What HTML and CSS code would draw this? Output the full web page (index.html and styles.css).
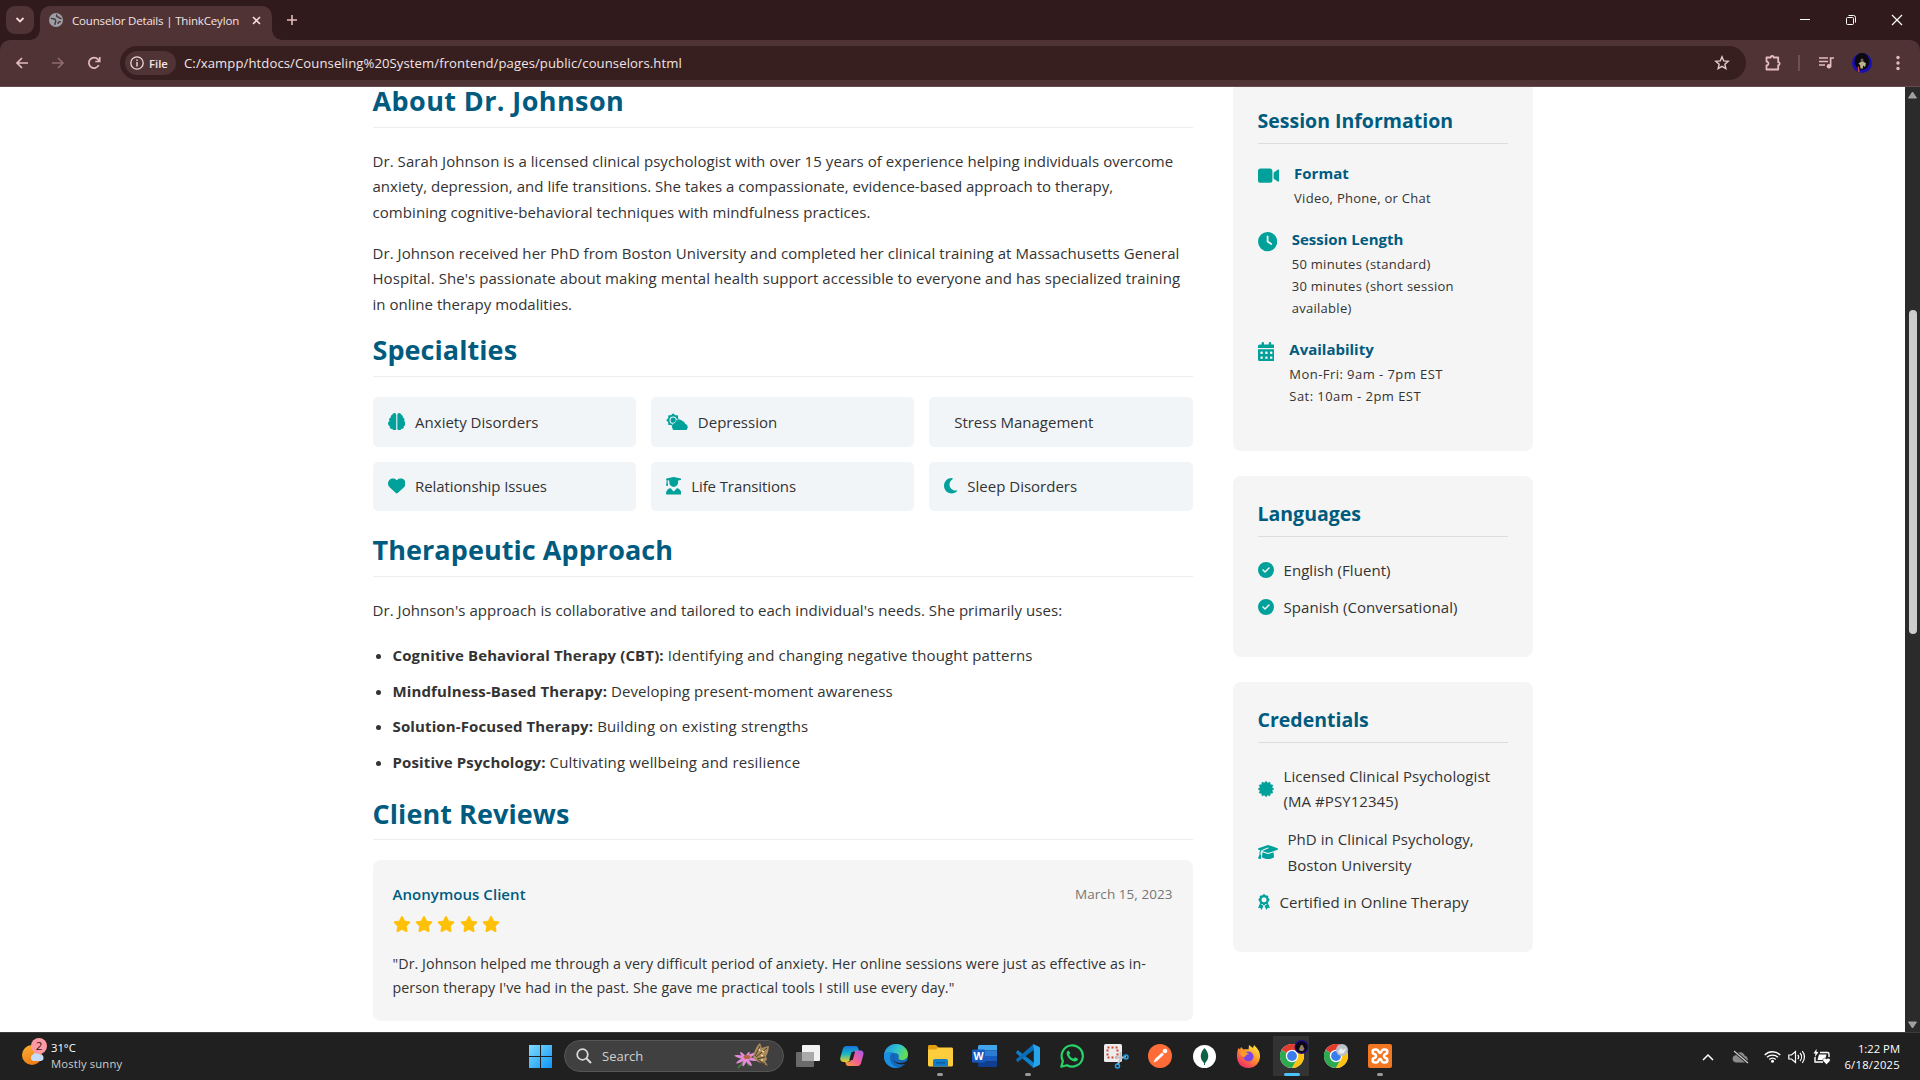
FILE: index.html
```html
<!DOCTYPE html>
<html lang="en">
<head>
<meta charset="utf-8">
<title>Counselor Details | ThinkCeylon</title>
<link rel="stylesheet" href="styles.css">
</head>
<body>
<svg class="defs" width="0" height="0">
  <defs>
    <symbol id="star" viewBox="0 0 576 512"><path d="M316.9 18C311.6 7 300.4 0 288.1 0s-23.4 7-28.8 18L195 150.3 51.4 171.5c-12 1.8-22 10.2-25.7 21.7s-.7 24.2 7.9 32.7L137.8 329 113.2 474.7c-2 12 3 24.2 12.9 31.3s23 8 33.8 2.3l128.3-68.5 128.3 68.5c10.8 5.7 23.9 4.9 33.8-2.3s14.9-19.3 12.9-31.3L438.5 329 542.7 225.9c8.6-8.5 11.7-21.2 7.9-32.7s-13.7-19.9-25.7-21.7L381.2 150.3 316.9 18z"/></symbol>
    <symbol id="check" viewBox="0 0 512 512"><path d="M256 512A256 256 0 1 0 256 0a256 256 0 1 0 0 512zM369 209L241 337c-9.4 9.4-24.6 9.4-33.9 0l-64-64c-9.4-9.4-9.4-24.6 0-33.9s24.6-9.4 33.9 0l47 47L335 175c9.4-9.4 24.6-9.4 33.9 0s9.4 24.6 0 33.9z"/></symbol>
    <symbol id="chrome" viewBox="0 0 24 24"><circle cx="12" cy="12" r="12" fill="#fff"/><path d="M12 12 1.6 6A12 12 0 0 1 22.4 6z" fill="#e33b2e"/><path d="M12 12 1.6 6A12 12 0 0 0 12 24L17.2 15z" fill="#2da94f"/><path d="M12 6.2H22.5A12 12 0 0 1 12 24l5.2-9z" fill="#fdc310"/><circle cx="12" cy="12" r="6.2" fill="#fff"/><circle cx="12" cy="12" r="4.9" fill="#3b7ded"/></symbol>
  </defs>
</svg>

<header class="browser">
  <div class="tabstrip">
    <button class="tab-search"><svg width="10" height="8" viewBox="0 0 10 8"><path d="M1.5 2 5 5.5 8.5 2" fill="none" stroke="#f0dada" stroke-width="1.8"/></svg></button>
    <div class="tab">
      <svg class="favicon" width="14" height="14" viewBox="0 0 14 14"><circle cx="7" cy="7" r="7" fill="#9aa0a6"/><path d="M2 5c1.500 1.500 3.500 0 4.500 2s-1 2.500-.5 5M8 1.500c-1 1.500-.5 2.500 1 2.500s1 2 3.500 1.500M12 9c-1.500-1-3 0-3 2" stroke="#503335" stroke-width="1.400" fill="none"/></svg>
      <span class="tab-title">Counselor Details | ThinkCeylon</span>
      <svg class="tab-close" width="9" height="9" viewBox="0 0 9 9"><path d="M1 1l7 7M8 1 1 8" stroke="#f0dada" stroke-width="1.600"/></svg>
    </div>
    <svg class="new-tab" width="12" height="12" viewBox="0 0 12 12"><path d="M6 1v10M1 6h10" stroke="#e5bcbd" stroke-width="1.600"/></svg>
    <div class="window-controls">
      <svg width="46" height="40" viewBox="0 0 46 40"><path d="M18 19.500h10" stroke="#fff"/></svg>
      <svg width="46" height="40" viewBox="0 0 46 40"><rect x="18.500" y="17.500" width="7" height="7" rx="1" fill="none" stroke="#fff"/><path d="M20.500 15.500h5a2 2 0 0 1 2 2v5" fill="none" stroke="#fff"/></svg>
      <svg width="46" height="40" viewBox="0 0 46 40"><path d="M18 15l10 10M28 15 18 25" stroke="#fff" stroke-width="1.200"/></svg>
    </div>
  </div>
  <div class="toolbar">
    <div class="nav">
      <svg width="14" height="14" viewBox="0 0 14 14"><path d="M13 7H2M7 2 2 7l5 5" fill="none" stroke="#e5bcbd" stroke-width="1.700"/></svg>
      <svg width="14" height="14" viewBox="0 0 14 14"><path d="M1 7h11M7 2l5 5-5 5" fill="none" stroke="#8d6b6d" stroke-width="1.700"/></svg>
      <svg width="14" height="14" viewBox="0 0 14 14"><path d="M11.800 9A5.200 5.200 0 1 1 11 3.400L12.500 5M12.700 1v4.500H8.300" fill="none" stroke="#e5bcbd" stroke-width="1.700"/></svg>
    </div>
    <div class="omnibox">
      <div class="chip"><svg width="14" height="14" viewBox="0 0 14 14"><circle cx="7" cy="7" r="6.200" fill="none" stroke="#f0dada" stroke-width="1.300"/><path d="M7 6v4.500M7 3.400v1.500" stroke="#f0dada" stroke-width="1.400"/></svg><span>File</span></div>
      <span class="url">C:/xampp/htdocs/Counseling%20System/frontend/pages/public/counselors.html</span>
      <svg class="bookmark" width="16" height="16" viewBox="0 0 16 16"><path d="M8 1.800l1.750 4.100 4.450.4-3.370 2.950 1 4.350L8 11.300l-3.830 2.300 1-4.350L1.800 6.300l4.450-.4z" fill="none" stroke="#e5cccc" stroke-width="1.400"/></svg>
    </div>
    <div class="actions">
      <svg width="18" height="18" viewBox="0 0 18 18"><path d="M2.500 3.500h4.200a1.500 1.500 0 0 1 3 0h4.500v4.700a1.500 1.500 0 0 1 0 3v4.300H2.500v-4a2 2 0 0 0 0-4z" fill="none" stroke="#e5bcbd" stroke-width="1.800" stroke-linejoin="round"/></svg>
      <span class="divider"></span>
      <svg width="16" height="14" viewBox="0 0 16 14"><path d="M0 2h9M0 5.500h9M0 9h6" stroke="#e5bcbd" stroke-width="1.600"/><circle cx="10" cy="10.200" r="2.300" fill="#e5bcbd"/><path d="M11.600 10.500V2H15" fill="none" stroke="#e5bcbd" stroke-width="1.700"/></svg>
      <svg class="avatar" width="20" height="20" viewBox="0 0 20 20"><circle cx="10" cy="10" r="10" fill="#1a0fb0"/><ellipse cx="10" cy="8.500" rx="7.400" ry="8.500" fill="#0a0810"/><circle cx="10" cy="7" r="1.500" fill="#7a5a48"/><path d="M6.500 10.500l2.500-2h2.500l2.500 2-1 3.500-2-1.500V15.500H8.500l-.5-3.500z" fill="#b8b08e"/><path d="M6.300 13.500 6.800 19" stroke="#c8502a" stroke-width="1.300"/></svg>
      <svg width="4" height="16" viewBox="0 0 4 16"><g fill="#e5bcbd"><circle cx="2" cy="2.500" r="1.700"/><circle cx="2" cy="8" r="1.700"/><circle cx="2" cy="13.500" r="1.700"/></g></svg>
    </div>
  </div>
</header>

<div class="viewport">
  <main class="page">
    <section class="details">
      <h2 class="wide">About Dr. Johnson</h2>
      <p>Dr. Sarah Johnson is a licensed clinical psychologist with over 15 years of experience helping individuals overcome<br><span class="tight">anxiety, depression, and life transitions. She takes a compassionate, evidence-based approach to therapy,</span><br>combining cognitive-behavioral techniques with mindfulness practices.</p>
      <p>Dr. Johnson received her PhD from Boston University and completed her clinical training at Massachusetts General<br>Hospital. She's passionate about making mental health support accessible to everyone and has specialized training<br><span class="tight">in online therapy modalities.</span></p>
      <h2>Specialties</h2>
      <div class="specialties">
        <div class="specialty"><svg class="w16" viewBox="0 0 512 512"><path d="M184 0c30.900 0 56 25.100 56 56V456c0 30.900-25.100 56-56 56c-28.900 0-52.700-21.900-55.700-50.100c-5.200 1.400-10.700 2.100-16.300 2.100c-35.300 0-64-28.700-64-64c0-7.400 1.300-14.600 3.600-21.200C21.400 367.400 0 338.200 0 304c0-31.900 18.700-59.500 45.800-72.300C37.100 220.800 32 207 32 192c0-30.700 21.600-56.300 50.400-62.600C80.800 123.900 80 118 80 112c0-29.900 20.600-55.100 48.300-62.100C131.300 21.900 155.100 0 184 0zM328 0c28.900 0 52.600 21.900 55.700 49.900c27.800 7 48.300 32.100 48.300 62.100c0 6-.8 11.900-2.400 17.400c28.800 6.200 50.400 31.900 50.400 62.600c0 15-5.100 28.800-13.800 39.700C493.300 244.500 512 272.100 512 304c0 34.200-21.400 63.400-51.600 74.800c2.300 6.600 3.600 13.800 3.600 21.200c0 35.300-28.700 64-64 64c-5.600 0-11.100-.7-16.300-2.100c-3 28.200-26.800 50.100-55.700 50.100c-30.900 0-56-25.100-56-56V56c0-30.900 25.100-56 56-56z"/></svg><span>Anxiety Disorders</span></div>
        <div class="specialty"><svg class="w20" viewBox="0 0 640 512"><g transform="translate(208 208)"><rect x="-142" y="-142" width="284" height="284" rx="14"/><rect x="-142" y="-142" width="284" height="284" rx="14" transform="rotate(45)"/><circle r="92" fill="none" stroke="#f2f5f8" stroke-width="32"/></g><path d="M288 512a112 112 0 0 1-30-220 128 128 0 0 1 222-62 100 100 0 0 1 76 82A102 102 0 0 1 544 512z" stroke="#f2f5f8" stroke-width="26" paint-order="stroke"/></svg><span>Depression</span></div>
        <div class="specialty"><svg class="w0"></svg><span>Stress Management</span></div>
        <div class="specialty"><svg class="w16" viewBox="0 0 512 512"><path d="M47.600 300.400L228.300 469.100c7.500 7 17.400 10.900 27.700 10.900s20.200-3.900 27.700-10.900L464.400 300.400c30.400-28.300 47.600-68 47.600-109.500v-5.800c0-69.900-50.500-129.500-119.400-141C347 36.500 300.600 51.400 268 84L256 96 244 84c-32.600-32.600-79-47.500-124.600-39.900C50.500 55.600 0 115.200 0 185.100v5.800c0 41.500 17.200 81.200 47.600 109.500z"/></svg><span class="narrow">Relationship Issues</span></div>
        <div class="specialty"><svg class="w14" viewBox="0 0 448 512"><path d="M219.300 .5c3.100-.6 6.300-.6 9.400 0l200 40C439.900 42.700 448 52.600 448 64s-8.100 21.300-19.300 23.500L352 102.900V160c0 70.700-57.300 128-128 128s-128-57.300-128-128V102.900L48 93.300v65.100l15.700 78.400c.9 4.700-.3 9.600-3.300 13.300s-7.600 5.900-12.400 5.900H16c-4.800 0-9.300-2.100-12.400-5.900s-4.300-8.600-3.300-13.300L16 158.400V86.600C6.500 83.300 0 74.300 0 64C0 52.600 8.100 42.700 19.300 40.500l200-40zM111.900 327.700c10.500-3.400 21.800 .4 29.400 8.500l71 75.500c6.300 6.700 17 6.700 23.300 0l71-75.500c7.600-8.100 18.900-11.900 29.400-8.500C401 348.600 448 409.400 448 481.300c0 17-13.800 30.700-30.700 30.700H30.700C13.800 512 0 498.200 0 481.300c0-71.900 47-132.700 111.900-153.600z"/></svg><span class="narrow">Life Transitions</span></div>
        <div class="specialty"><svg class="w12" viewBox="0 0 384 512"><path d="M223.500 32C100 32 0 132.300 0 256S100 480 223.500 480c60.600 0 115.500-24.200 155.800-63.400c5-4.900 6.300-12.500 3.100-18.700s-10.100-9.700-17-8.500c-9.800 1.700-19.800 2.600-30.100 2.600c-96.900 0-175.500-78.800-175.500-176c0-65.800 36-123.100 89.300-153.300c6.100-3.500 9.200-10.500 7.700-17.300s-7.300-11.900-14.300-12.500c-6.300-.5-12.600-.8-19-.8z"/></svg><span>Sleep Disorders</span></div>
      </div>
      <h2>Therapeutic Approach</h2>
      <p>Dr. Johnson's approach is collaborative and tailored to each individual's needs. She primarily uses:</p>
      <ul class="methods">
        <li><strong>Cognitive Behavioral Therapy (CBT):</strong> <span class="loose">Identifying and changing negative thought patterns</span></li>
        <li><strong>Mindfulness-Based Therapy:</strong> Developing present-moment awareness</li>
        <li><strong>Solution-Focused Therapy:</strong> <span class="loose">Building on existing strengths</span></li>
        <li><strong>Positive Psychology:</strong> <span class="loose">Cultivating wellbeing and resilience</span></li>
      </ul>
      <h2>Client Reviews</h2>
      <article class="review">
        <div class="review-head"><span class="reviewer">Anonymous Client</span><span class="review-date">March 15, 2023</span></div>
        <div class="stars"><svg><use href="#star"/></svg><svg><use href="#star"/></svg><svg><use href="#star"/></svg><svg><use href="#star"/></svg><svg><use href="#star"/></svg></div>
        <p class="quote">"Dr. Johnson helped me through a very difficult period of anxiety. Her online sessions were just as effective as in-<br>person therapy I've had in the past. She gave me practical tools I still use every day."</p>
      </article>
    </section>

    <aside class="sidebar">
      <section class="card card-session">
        <h3>Session Information</h3>
        <div class="info">
          <svg class="w18" viewBox="0 0 576 512"><path d="M0 128C0 92.700 28.700 64 64 64H320c35.300 0 64 28.700 64 64V384c0 35.300-28.700 64-64 64H64c-35.300 0-64-28.700-64-64V128zM559.100 99.800c10.400 5.600 16.900 16.400 16.900 28.200V384c0 11.800-6.500 22.600-16.900 28.200s-23 5-32.900-1.600l-96-64L416 337.100V320 192 174.900l14.200-9.500 96-64c9.800-6.500 22.400-7.200 32.900-1.600z"/></svg>
          <div><h4>Format</h4><p>Video, Phone, or Chat</p></div>
        </div>
        <div class="info">
          <svg class="w16" viewBox="0 0 512 512"><path d="M256 0a256 256 0 1 1 0 512A256 256 0 1 1 256 0zM232 120V256c0 8 4 15.500 10.700 20l96 64c11 7.400 25.900 4.400 33.300-6.700s4.400-25.900-6.700-33.300L280 243.200V120c0-13.300-10.700-24-24-24s-24 10.700-24 24z"/></svg>
          <div><h4>Session Length</h4><p>50 minutes (standard)<br>30 minutes (short session<br>available)</p></div>
        </div>
        <div class="info">
          <svg class="w14" viewBox="0 0 448 512"><path d="M128 0c17.700 0 32 14.300 32 32V64H288V32c0-17.700 14.300-32 32-32s32 14.300 32 32V64h48c26.500 0 48 21.500 48 48v48H0V112C0 85.500 21.500 64 48 64H96V32c0-17.700 14.300-32 32-32zM0 192H448V464c0 26.500-21.500 48-48 48H48c-26.500 0-48-21.500-48-48V192zm64 80v32c0 8.800 7.200 16 16 16h32c8.800 0 16-7.200 16-16V272c0-8.800-7.200-16-16-16H80c-8.800 0-16 7.200-16 16zm128 0v32c0 8.800 7.200 16 16 16h32c8.800 0 16-7.200 16-16V272c0-8.800-7.200-16-16-16H208c-8.800 0-16 7.200-16 16zm144-16c-8.800 0-16 7.200-16 16v32c0 8.800 7.200 16 16 16h32c8.800 0 16-7.200 16-16V272c0-8.800-7.200-16-16-16H336zM64 400v32c0 8.800 7.200 16 16 16h32c8.800 0 16-7.200 16-16V400c0-8.800-7.200-16-16-16H80c-8.800 0-16 7.200-16 16zm144-16c-8.800 0-16 7.200-16 16v32c0 8.800 7.200 16 16 16h32c8.800 0 16-7.200 16-16V400c0-8.800-7.200-16-16-16H208zm112 16v32c0 8.800 7.200 16 16 16h32c8.800 0 16-7.200 16-16V400c0-8.800-7.200-16-16-16H336c-8.800 0-16 7.200-16 16z"/></svg>
          <div><h4>Availability</h4><p class="hours">Mon-Fri: 9am - 7pm EST<br>Sat: 10am - 2pm EST</p></div>
        </div>
      </section>
      <section class="card">
        <h3>Languages</h3>
        <div class="entry"><svg class="w16"><use href="#check"/></svg><span>English (Fluent)</span></div>
        <div class="entry"><svg class="w16"><use href="#check"/></svg><span>Spanish (Conversational)</span></div>
      </section>
      <section class="card">
        <h3>Credentials</h3>
        <div class="entry"><svg class="w16" viewBox="-8 -8 16 16"><path d="M8 0 6 1.600 6.930 4 4.400 4.400 4 6.930 1.600 6 0 8-1.600 6-4 6.930-4.400 4.400-6.930 4-6 1.600-8 0-6-1.600-6.930-4-4.400-4.400-4-6.930-1.600-6 0-8 1.600-6 4-6.930 4.400-4.400 6.930-4 6-1.600z" stroke="#00a19a" stroke-width=".4" stroke-linejoin="round"/></svg><span>Licensed Clinical Psychologist<br>(MA #PSY12345)</span></div>
        <div class="entry"><svg class="w20" viewBox="0 0 640 512"><path d="M320 32c-8.100 0-16.100 1.400-23.700 4.100L15.800 137.400C6.300 140.900 0 149.900 0 160s6.300 19.100 15.800 22.600l57.900 20.900C57.300 229.300 48 259.800 48 291.900v28.100c0 28.400-10.800 57.700-22.300 80.800c-6.500 13-13.900 25.800-22.500 37.600C0 442.700-.9 448.300 .9 453.400s6 8.900 11.200 10.200l64 16c4.200 1.100 8.700 .3 12.400-2s6.300-6.100 7.100-10.400c8.600-42.800 4.300-81.200-2.100-108.700C90.300 344.300 86 329.800 80 316.500V291.900c0-30.200 10.200-58.700 27.900-81.500c12.900-15.500 29.600-28 49.200-35.700l157-61.700c8.200-3.200 17.500 .8 20.700 9s-.8 17.500-9 20.700l-157 61.700c-12.400 4.900-23.300 12.400-32.200 21.600l159.600 57.600c7.600 2.700 15.600 4.100 23.700 4.100s16.100-1.400 23.700-4.100L624.200 182.600c9.500-3.400 15.800-12.500 15.800-22.600s-6.300-19.100-15.800-22.600L343.700 36.100C336.100 33.400 328.100 32 320 32zM128 408c0 35.300 86 72 192 72s192-36.700 192-72L496.700 262.600 354.500 314c-11.100 4-22.800 6-34.500 6s-23.500-2-34.500-6L143.300 262.600 128 408z"/></svg><span>PhD in Clinical Psychology,<br>Boston University</span></div>
        <div class="entry"><svg class="w12" viewBox="0 0 12 16"><path d="M2 9.500 0 14l2.200-.2L3.500 16l2-4zM10 9.500l2 4.500-2.200-.2L8.500 16l-2-4z"/><g transform="translate(6 5.700)"><rect x="-4.200" y="-4.200" width="8.400" height="8.400" rx="1"/><rect x="-4.200" y="-4.200" width="8.400" height="8.400" rx="1" transform="rotate(45)"/><circle r="2.500" fill="#f5f5f5"/></g></svg><span>Certified in Online Therapy</span></div>
      </section>
    </aside>
  </main>
  <div class="scrollbar">
    <svg width="9" height="8" viewBox="0 0 9 8"><path d="M4.500 1 8.500 7h-8z" fill="#a0a0a0" stroke="#a0a0a0" stroke-linejoin="round"/></svg>
    <span class="thumb"></span>
    <svg width="9" height="8" viewBox="0 0 9 8"><path d="M4.500 7 8.500 1h-8z" fill="#a0a0a0" stroke="#a0a0a0" stroke-linejoin="round"/></svg>
  </div>
</div>

<footer class="taskbar">
  <div class="weather">
    <svg width="26" height="28" viewBox="0 0 26 28"><defs><linearGradient id="sun" x1="0" y1="0" x2=".4" y2="1"><stop offset="0" stop-color="#f9b233"/><stop offset="1" stop-color="#ef7d16"/></linearGradient></defs><circle cx="10" cy="17" r="10" fill="url(#sun)"/><path d="M11 23a3.500 3.500 0 0 1 0-6.500 4 4 0 0 1 7 0 3.300 3.300 0 0 1 1 6.500z" fill="#c5dcfa"/><circle cx="17" cy="8" r="8" fill="#ff99a4"/><text x="17" y="12" text-anchor="middle" class="badge">2</text></svg>
    <div class="weather-text"><div>31°C</div><div class="muted">Mostly sunny</div></div>
  </div>
  <div class="apps">
    <div class="slot"><svg width="23" height="23" viewBox="0 0 23 23"><defs><linearGradient id="win" x1="0" y1="0" x2="1" y2="1"><stop offset="0" stop-color="#7fdcff"/><stop offset="1" stop-color="#0f94f5"/></linearGradient></defs><path d="M0 0h11v11H0zM12 0h11v11H12zM0 12h11v11H0zM12 12h11v11H12z" fill="url(#win)"/></svg></div>
    <div class="search">
      <svg width="16" height="16" viewBox="0 0 16 16"><circle cx="6.500" cy="6.500" r="5.300" fill="none" stroke="#dcdcdc" stroke-width="1.700"/><path d="M10.400 10.400 15 15" stroke="#dcdcdc" stroke-width="2"/></svg>
      <span>Search</span>
      <svg class="butterfly" width="36" height="26" viewBox="0 0 36 26"><path d="M12 16 4 25M12 17l3 6" stroke="#4a8a3c" stroke-width="1.200"/><g fill="#e58ad8"><ellipse cx="12" cy="15" rx="12" ry="1.800" transform="rotate(12 12 15)"/><ellipse cx="12" cy="15" rx="11" ry="1.700" transform="rotate(-28 12 15)"/><ellipse cx="12" cy="16" rx="9" ry="1.700" transform="rotate(50 12 16)"/><ellipse cx="12" cy="16" rx="8" ry="1.700" transform="rotate(-65 12 16)"/></g><ellipse cx="13" cy="14" rx="3.500" ry="2" fill="#b0683a"/><path d="M19 15C20 9 22 3 26 0l2 5c2-1 5-2 7-2-.5 4-1 8-3 10l1 4-2 1 3 5-6-3-4-1z" fill="#a98a5c"/><path d="M21 13l5-10M22 14 33 5M23 16l8-2M24 17l7 4" stroke="#4b3a24"/><path d="M25 6l1 2M28 8l2 1M27 12l2 1M27 17l2 0" stroke="#ead5a8" stroke-width="1.500"/></svg>
    </div>
    <div class="slot"><svg width="24" height="24" viewBox="0 0 24 24"><rect x="0" y="8" width="18" height="15" rx="1" fill="#6a6a6a"/><rect x="6" y="1" width="18" height="16" rx="1" fill="#f2f2f2"/><path d="M6 8h12v9H6z" fill="#aaa"/></svg></div>
    <div class="slot"><svg width="24" height="22" viewBox="0 0 24 22"><defs><linearGradient id="cpa" x1="0" y1="0" x2="0" y2="1"><stop offset="0" stop-color="#1673df"/><stop offset=".5" stop-color="#18b7c4"/><stop offset="1" stop-color="#f3cf23"/></linearGradient><linearGradient id="cpb" x1="1" y1="0" x2="0" y2="1"><stop offset="0" stop-color="#a45bf0"/><stop offset=".5" stop-color="#f25c98"/><stop offset="1" stop-color="#fba02f"/></linearGradient></defs><path d="M6.500 1h9c2 0 2.500 1 3 3l.5 2h-4c-2 0-2.500 1-3 3l-1.500 5c-.7 2-1.500 3-4 3H4c-3 0-4.500-2-3.500-5l2.300-8C3.500 2 4.500 1 6.500 1z" fill="url(#cpa)"/><path d="M17.500 21h-9c-2 0-2.500-1-3-3l-.3-1H8c2 0 3-1 3.500-3L13 9c.7-2 1.500-3.500 4-3.500h3c3 0 4 2 3.300 4.500l-2.200 8c-.7 2-1.600 3-3.600 3z" fill="url(#cpb)"/><path d="M11.500 7h3.500l-2.300 8H9.300z" fill="#202020"/></svg></div>
    <div class="slot"><svg width="24" height="24" viewBox="0 0 24 24"><defs><linearGradient id="eda" x1="0" y1="0" x2="1" y2=".4"><stop offset="0" stop-color="#1b8ede"/><stop offset=".6" stop-color="#32c6cb"/><stop offset="1" stop-color="#62dc55"/></linearGradient></defs><circle cx="12" cy="12" r="12" fill="#1468bd"/><path d="M0 11C1 4 6 0 12 0c7 0 12 5 12 10 0 4-3 6-6 6-2.500 0-4-.8-3.500-2 .8-1.200.5-5-4-5C6 9 2 9 0 11z" fill="url(#eda)"/><path d="M0 11c2-3 6-4 10-3-4 1-5 5-3.500 9 1.300 4 5 6.500 9 6C8 26-1 20 0 11z" fill="#1b8fe0"/><path d="M10 10.500c-2 2-1 6 2 7.500s7 1.200 10-.5l3-1v4l-2 .5-2.500-1c-3 1-9 .5-11-4-.8-2-.5-4 .5-5.500z" fill="#202020"/></svg></div>
    <div class="slot running"><svg width="25" height="22" viewBox="0 0 25 22"><path d="M0 1.500C0 .7.700 0 1.500 0H8l3 3h12.500c.8 0 1.500.7 1.500 1.500V10H0z" fill="#e2a010"/><path d="M0 4.500h8l2-2h13.500c.8 0 1.500.7 1.500 1.500v16c0 .8-.7 1.500-1.500 1.500h-22C.7 21.500 0 20.800 0 20z" fill="#fdcd3d"/><path d="M5 21.500V16c0-1.200.8-2 2-2h11c1.200 0 2 .8 2 2v5.500z" fill="#127cc9"/><path d="M8 17h9v1.500H8z" fill="#0a5ba0"/></svg></div>
    <div class="slot"><svg width="25" height="22" viewBox="0 0 25 22"><path d="M6 1.500C6 .7 6.700 0 7.500 0H25v5.500H6z" fill="#41a5ee"/><path d="M6 5.500h19V11H6z" fill="#2b7cd3"/><path d="M6 11h19v5.500H6z" fill="#185abd"/><path d="M6 16.500h19V22H7.500C6.700 22 6 21.300 6 20.500z" fill="#103f91"/><rect y="4.500" width="13" height="13" rx="1.300" fill="#185abd"/><text x="6.500" y="14.500" text-anchor="middle" class="word-mark">W</text></svg></div>
    <div class="slot running"><svg width="24" height="24" viewBox="0 0 24 24"><path d="M1.500 6 19 19.500 17.500 24 0 9z" fill="#0f7fcb"/><path d="M0 15.500 17.500 0l1.500 5L1.500 18.200z" fill="#0a6db8"/><path d="M17 0l6 2.700c.6.300 1 .8 1 1.500v15.600c0 .7-.4 1.200-1 1.500L17 24l.8-5V5z" fill="#27a4ee"/></svg></div>
    <div class="slot"><svg width="24" height="24" viewBox="0 0 24 24"><path d="M1.300 22.700 2.900 17A10.600 10.600 0 1 1 7 21.200z" fill="none" stroke="#25d366" stroke-width="2.200" stroke-linejoin="round"/><path d="M8.500 6.500c-1.500.5-2.300 2-1.700 4 1 3.500 4.500 6.700 8 7 1.800.1 3-.8 3.200-2.700l-3-1.600-1.600 1.500c-2-.8-3.400-2.200-4.200-4L10.400 9z" fill="#25d366"/></svg></div>
    <div class="slot"><svg width="25" height="25" viewBox="0 0 25 25"><rect width="18" height="18" rx="1.500" fill="#ececec"/><rect x="3.500" y="3.500" width="10" height="10" fill="none" stroke="#d8432c" stroke-width="2" stroke-dasharray="2 2"/><path d="M16.500 8v7l-3 6M12 13.500h7l3-1" stroke="#bfc5ca" stroke-width="1.800" fill="none"/><circle cx="22" cy="13" r="2" fill="none" stroke="#2aa0e8" stroke-width="1.500"/><circle cx="13.500" cy="22" r="2" fill="none" stroke="#2aa0e8" stroke-width="1.500"/></svg></div>
    <div class="slot"><svg width="24" height="24" viewBox="0 0 24 24"><circle cx="12" cy="12" r="12" fill="#ff6c37"/><path d="M5.500 18.500 7 15l7-6.500 2 2L9 17z" fill="#fff"/><circle cx="17" cy="7" r="2.300" fill="#fff"/></svg></div>
    <div class="slot"><svg width="23" height="23" viewBox="0 0 23 23"><circle cx="11.500" cy="11.500" r="11.500" fill="#fff"/><path d="M11.500 3c5 5.500 5 11 0 15.500C6.500 14 6.500 8.500 11.500 3z" fill="#116149"/><path d="M11.500 14v6" stroke="#116149"/></svg></div>
    <div class="slot"><svg width="24" height="24" viewBox="0 0 24 24"><defs><linearGradient id="ff" x1=".9" y1="0" x2=".2" y2="1"><stop offset="0" stop-color="#fff04a"/><stop offset=".45" stop-color="#ff9a28"/><stop offset="1" stop-color="#f0206e"/></linearGradient></defs><path d="M2.500 4 4 5.500 5 3l2.500 2.500c2-.5 3-.5 5 0L13 1l4 3 1-3c3 3 6 6 6 11A11.500 11.500 0 0 1 12 24C5 24 1 19 1 12c0-3 .5-6 1.500-8z" fill="url(#ff)"/><circle cx="12.500" cy="12.500" r="5" fill="#7a45e5"/><path d="M4 9c3-2 7-1 9 1-2 0-3 1-4 3-2 0-4-1-5-4z" fill="#ff9e2c"/></svg></div>
    <div class="slot active"><svg width="29" height="28" viewBox="0 0 29 28"><use href="#chrome" x="0" y="4" width="24" height="24"/><circle cx="21.500" cy="7" r="7" fill="#1d0c8a"/><circle cx="21.500" cy="7" r="5.800" fill="#0c0814"/><path d="M19 9l2-4h1.500l2 4-1.500 2h-3z" fill="#8f8061"/></svg></div>
    <div class="slot"><svg width="24" height="24" viewBox="0 0 24 24"><use href="#chrome" width="24" height="24"/><circle cx="18" cy="6" r="6" fill="#b9c2c8"/><path d="M14 8l3-4 2 2 3-2-2 5-3 1z" fill="#e8eef2"/></svg></div>
    <div class="slot running"><svg width="24" height="24" viewBox="0 0 24 24"><rect width="24" height="24" rx="2" fill="#f37623"/><path d="M7 5.500h1.500C11 5.500 10 9 12 9s1-3.500 3.500-3.500H17c3 0 3 4 .5 4.500-2 .6-2 3.400 0 4 2.500.5 2.500 4.500-.5 4.500h-1.500C13 18.500 14 15 12 15s-1 3.500-3.500 3.500H7c-3 0-3-4-.5-4.500 2-.6 2-3.400 0-4C4 9.500 4 5.500 7 5.500z" fill="none" stroke="#fff" stroke-width="2.600"/></svg></div>
  </div>
  <div class="tray">
    <svg width="12" height="8" viewBox="0 0 12 8"><path d="M1 7l5-5 5 5" fill="none" stroke="#fff" stroke-width="1.500"/></svg>
    <svg class="cloud" width="17" height="14" viewBox="0 0 17 14"><path d="M4 12.500a3.700 3.700 0 0 1-.5-7.300 5 5 0 0 1 9.300.5 3.500 3.500 0 0 1 .5 6.800z" fill="#8a8a8a"/><path d="M2 1l14 12" stroke="#202020" stroke-width="3"/><path d="M2 1l14 12" stroke="#ccc" stroke-width="1.200"/></svg>
    <svg width="17" height="13" viewBox="0 0 17 13"><g fill="none" stroke="#fff" stroke-width="1.300"><path d="M.7 5a11 11 0 0 1 15.600 0M3 7.300a7.800 7.800 0 0 1 11 0M5.300 9.500a4.500 4.500 0 0 1 6.400 0"/></g><circle cx="8.500" cy="11.300" r="1.500" fill="#fff"/></svg>
    <svg width="18" height="14" viewBox="0 0 18 14"><g fill="none" stroke="#fff" stroke-width="1.200"><path d="M.8 5v4h2.700L7.500 12.500v-11L3.500 5zM9.800 4.800a3.500 3.500 0 0 1 0 4.400M12 3a6 6 0 0 1 0 8M14.300 1.200a9 9 0 0 1 0 11.600"/></g></svg>
    <svg width="18" height="16" viewBox="0 0 18 16"><path d="M7 3.500h7.500a1.500 1.500 0 0 1 1.500 1.500v3M2 8v5h8" fill="none" stroke="#fff" stroke-width="1.400"/><path d="M6 5.500h7.500l-1.500 5.500H4.500z" fill="#fff"/><path d="M3.500 0 .5 4.500h2L2 8l3.500-5h-2z" fill="#fff"/><path d="M13.500 15.500 10 12c-1-2 1.500-4 3.500-2 2-2 4.500 0 3.500 2z" fill="#fff" stroke="#202020" stroke-width=".5"/></svg>
    <div class="clock"><div>1:22 PM</div><div class="date">6/18/2025</div></div>
  </div>
</footer>
</body>
</html>
```
FILE: styles.css
```css
* { box-sizing: border-box; margin: 0; padding: 0; }
body { width: 1920px; height: 1080px; overflow: hidden; display: flex; flex-direction: column; background: #fff; font-family: "Open Sans", "Noto Sans", sans-serif; font-size: 15px; color: #333; }
svg { display: block; flex: none; }
.defs { position: absolute; }

/* browser chrome */
.browser { height: 87px; background: #311a1b; color: #f3e4e4; }
.tabstrip { height: 40px; display: flex; align-items: center; padding-left: 6px; }
.tab-search { width: 28px; height: 28px; border: 0; border-radius: 9px; background: #503335; display: grid; place-items: center; margin-right: 6px; }
.tab { position: relative; align-self: flex-end; width: 232px; height: 34px; border-radius: 10px 10px 0 0; background: #503335; display: flex; align-items: center; padding: 0 11px 6px 9px; }
.tab::before, .tab::after { content: ""; position: absolute; bottom: 0; width: 10px; height: 10px; }
.tab::before { left: -10px; background: radial-gradient(circle at 0 0, transparent 9.5px, #503335 10px); }
.tab::after { right: -10px; background: radial-gradient(circle at 100% 0, transparent 9.5px, #503335 10px); }
.tab-title { margin-left: 9px; font-size: 11.5px; letter-spacing: -.17px; white-space: nowrap; }
.tab-close { margin-left: auto; }
.new-tab { margin-left: 14px; }
.window-controls { margin-left: auto; display: flex; }
.toolbar { height: 47px; background: #503335; border-bottom: 1px solid #664a4c; border-radius: 10px 10px 0 0; display: flex; align-items: center; }
.nav { width: 120px; padding-left: 15px; display: flex; gap: 22px; }
.omnibox { width: 1626px; height: 34px; border-radius: 17px; background: #371f20; display: flex; align-items: center; padding: 0 16px 0 5px; }
.chip { width: 51px; height: 24px; border-radius: 12px; background: #503335; display: flex; align-items: center; gap: 5px; padding-left: 5px; font-size: 11.3px; font-weight: 600; }
.url { margin-left: 8px; font-size: 13.1px; letter-spacing: .095px; white-space: nowrap; }
.bookmark { margin-left: auto; }
.actions { flex: 1; display: flex; align-items: center; padding-left: 18px; }
.divider { width: 2px; height: 16px; background: #6e5153; margin: 0 19px 0 16px; }
.avatar { margin: 0 24px 0 17px; }

/* page */
.viewport { height: 945px; overflow: hidden; display: flex; }
.page { width: 1905px; padding-left: 372.5px; display: grid; grid-template-columns: 820px 300px; column-gap: 40px; align-items: start; letter-spacing: .065px; }
.details { margin-top: -4.6px; }
h2 { color: #005b7f; font-size: 27px; font-weight: 700; line-height: 34.56px; padding: 1.9px 0 8.1px; border-bottom: 1px solid #eee; margin-bottom: 20px; }
h2.wide { letter-spacing: .4px; }
p { line-height: 25.6px; padding-top: .8px; margin-bottom: 14.2px; white-space: nowrap; }
.tight { letter-spacing: .025px; }
.loose { letter-spacing: .16px; }
.narrow { letter-spacing: -.1px; }
.specialties { display: grid; grid-template-columns: repeat(3, 1fr); gap: 15px; margin-bottom: 20px; letter-spacing: 0; }
.specialty { display: flex; align-items: center; gap: 10px; padding: 12px 15px; line-height: 25.6px; background: #f2f5f8; border-radius: 5px; }
.specialty svg { fill: #00a19a; height: 17.6px; margin-top: -1px; font-size: 17.6px; }
.specialty span { padding-top: .8px; margin-bottom: -.8px; }
.w0 { width: 0; }
.w12 { width: .75em; }
.w14 { width: .875em; }
.w16 { width: 1em; }
.w18 { width: 1.125em; }
.w20 { width: 1.25em; }
.methods { margin: 20.2px 0 19.4px; padding-left: 20px; }
.methods li { line-height: 25.6px; margin-bottom: 9.9px; }
.methods li:last-child { margin-bottom: 0; }
.methods strong { letter-spacing: .13px; }
.review { background: #f5f5f5; border-radius: 8px; padding: 20px; }
.review-head { display: flex; justify-content: space-between; line-height: 25.6px; padding-top: 1.2px; margin-bottom: 3.6px; letter-spacing: .05px; }
.reviewer { font-weight: 600; color: #005b7f; }
.review-date { font-size: 13.5px; color: #777; }
.stars { display: flex; align-items: center; gap: 4.38px; height: 25.6px; margin-bottom: 15px; }
.stars svg { width: 18px; height: 16px; fill: #ffc107; }
.quote { font-size: 14.25px; line-height: 24.32px; margin: 0; }

.sidebar { display: grid; gap: 25px; margin-top: -4px; }
.card { background: #f5f5f5; border-radius: 8px; padding: 25px; }
.card-session { padding-bottom: 23.8px; }
h3 { color: #005b7f; font-size: 19.5px; font-weight: 700; line-height: 24.96px; padding: 1px 0 9px; border-bottom: 1px solid #ddd; margin-bottom: 20px; letter-spacing: 0; }
.info { display: flex; gap: 15px; margin-bottom: 20px; }
.info svg { fill: #00a19a; font-size: 19.2px; height: 19.2px; margin-top: 2.5px; }
h4 { color: #005b7f; font-size: 15px; line-height: 19.2px; padding-top: .4px; margin-bottom: 4.4px; letter-spacing: 0; }
.info p { font-size: 13px; line-height: 21.76px; padding-top: .5px; margin: 0 0 -.3px; letter-spacing: .28px; }
.info p.hours { letter-spacing: .45px; }
.entry { display: flex; align-items: center; gap: 10px; line-height: 25.6px; margin-bottom: 12px; white-space: nowrap; }
.entry span { padding-top: .9px; margin-bottom: -.9px; }
.entry svg { fill: #00a19a; font-size: 16px; height: 16px; }
.scrollbar { width: 15px; background: #2b2b2b; display: flex; flex-direction: column; align-items: center; padding: 4px 0 3px; }
.thumb { width: 8px; height: 324px; border-radius: 4px; background: #cdcdcd; margin: 211px 0 auto; }

/* taskbar */
.taskbar { height: 48px; background: #202020; border-top: 1px solid #3c3c3c; display: flex; color: #fff; font-size: 11.25px; line-height: 16px; }
.weather { width: 518px; padding: 5px 0 0 22px; display: flex; gap: 3px; }
.weather-text { padding-top: 2px; }
.muted { color: #ccc; letter-spacing: .16px; }
.badge { font-size: 11.5px; fill: #1a1a1a; }
.word-mark { font-size: 10.5px; font-weight: 700; fill: #fff; }
.apps { display: flex; }
.slot { position: relative; width: 44px; display: grid; place-items: center; }
.slot svg { margin-top: -1px; }
.running::after, .active::after { content: ""; position: absolute; bottom: 4px; left: 19px; width: 6px; height: 3px; border-radius: 2px; background: #9a9a9a; }
.active { background: linear-gradient(#333, #333) no-repeat 3px 3px / 36px 40px; }
.active::after { left: 14px; width: 16px; background: #4cc2ff; }
.active svg { margin: -6px 0 0 5px; }
.search { width: 220px; height: 32px; margin: 7px 2px 0; border-radius: 16px; background: #404040; border: 1px solid #555; display: flex; align-items: center; gap: 10px; padding: 0 13px 0 11px; font-size: 13px; color: #d0d0d0; }
.butterfly { margin-left: auto; }
.tray { flex: 1; display: flex; align-items: center; justify-content: flex-end; padding-right: 20px; }
.tray .cloud { margin: 0 15px 0 18px; }
.tray svg + svg + svg + svg { margin-left: 7px; }
.clock { width: 69px; text-align: right; }
.date { letter-spacing: .26px; }
```
